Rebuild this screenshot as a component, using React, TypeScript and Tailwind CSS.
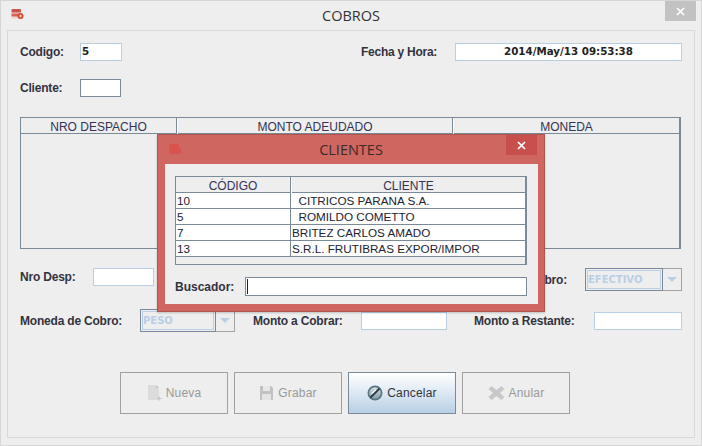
import React from "react";

const LABEL = "font-['Liberation_Sans',sans-serif] font-bold text-[12px] leading-none text-[#333340] whitespace-nowrap";

const AppIcon = ({ muted }: { muted?: boolean }) => (
  <svg width="13" height="13" viewBox="0 0 13 13">
    <rect x="0.5" y="1" width="9.5" height="10" rx="1" fill={muted ? "#d9534f" : "#f0d8d0"} />
    <rect x="0.5" y="1" width="9.5" height="3.5" rx="1" fill={muted ? "#d9534f" : "#c9524a"} />
    <rect x="0.5" y="5.5" width="9.5" height="3" fill={muted ? "#d9534f" : "#d9635a"} />
    <circle cx="9.5" cy="8" r="3" fill={muted ? "#d9534f" : "#d8443a"} />
    {!muted && <path d="M8 8h3M9.5 6.5v3" stroke="#f6d9a0" strokeWidth="1" />}
  </svg>
);

const CloseGlyph = () => (
  <svg width="9" height="9" viewBox="0 0 9 9">
    <path d="M1 1l7 7M8 1l-7 7" stroke="#ffffff" strokeWidth="1.7" />
  </svg>
);

const NewIcon = () => (
  <svg width="15" height="16" viewBox="0 0 15 16">
    <path d="M1 0h8l3 3v12H1z" fill="#dcdcdc" />
    <path d="M9 0l3 3H9z" fill="#c4c4c4" />
    <path d="M10 13.500h4.500M12.250 11.500v4" stroke="#c4c4c4" strokeWidth="1.2" />
  </svg>
);

const SaveIcon = () => (
  <svg width="15" height="16" viewBox="0 0 15 16">
    <path d="M1 1h11l2 2v12H1z" fill="#c2c2c2" />
    <rect x="4" y="1" width="7" height="5" fill="#e8e8e8" />
    <rect x="3" y="9" width="9" height="6" fill="#e4e4e4" />
  </svg>
);

const CancelIcon = () => (
  <svg width="16" height="16" viewBox="0 0 16 16">
    <defs>
      <linearGradient id="cancelFill" x1="0" y1="0" x2="0" y2="1">
        <stop offset="0" stopColor="#cfdce0" />
        <stop offset="1" stopColor="#83a0ac" />
      </linearGradient>
    </defs>
    <circle cx="8" cy="8" r="7.500" fill="#5c7480" />
    <circle cx="8" cy="8" r="5.800" fill="url(#cancelFill)" />
    <path d="M3.500 12.500l9-9" stroke="#2f3b42" strokeWidth="2" />
    <path d="M4.500 9l4.500-4.500" stroke="#eef4f5" strokeWidth="1.200" />
  </svg>
);

const DeleteIcon = () => (
  <svg width="17" height="16" viewBox="0 0 17 16">
    <path d="M3.500 1L8.500 5l5-4 3 3-4.500 4 4.500 4-3 3-5-4-5 4-3-3 4.500-4L.5 4z" fill="#c8c8c8" />
  </svg>
);

const Field = ({ className, value }: { className: string; value?: string }) => (
  <div className={`h-[18px] bg-white border border-[#b8cfe5] flex items-center font-['DejaVu_Sans',sans-serif] font-bold text-[10.3px] text-[#222] ${className}`}>
    {value}
  </div>
);

const Combo = ({ className, value }: { className: string; value: string }) => (
  <div className={`h-[23px] flex ${className}`}>
    <div className="flex-1 border border-[#7a8a99] bg-[#eeeeee] p-px">
      <div className="h-full border border-[#b8cfe5] flex items-center font-['DejaVu_Sans',sans-serif] font-bold text-[10px] text-[#b8cfe5]">
        {value}
      </div>
    </div>
    <div className="w-[19px] border border-l-0 border-[#a3a3a3] flex items-center justify-center">
      <svg width="10" height="5" viewBox="0 0 10 5">
        <path d="M0 0h10L5 5z" fill="#b8cfe5" />
      </svg>
    </div>
  </div>
);

const ActionButton = ({ label, icon, active }: { label: string; icon: React.ReactNode; active?: boolean }) => (
  <div
    className={`w-[108px] h-[42px] flex items-center justify-center gap-[4px] border font-['Liberation_Sans',sans-serif] text-[12px] tracking-[0.2px] ${
      active
        ? "border-[#7a8a99] text-[#333340] bg-gradient-to-b from-white via-[#dde8f3] to-[#b8cfe5]"
        : "border-[#a0a0a0] text-[#999999]"
    }`}
  >
    {icon}
    <span>{label}</span>
  </div>
);

const clientes = [
  ["10", "  CITRICOS PARANA S.A."],
  ["5", "  ROMILDO COMETTO"],
  ["7", "BRITEZ CARLOS AMADO"],
  ["13", "S.R.L. FRUTIBRAS EXPOR/IMPOR"],
];

const ClientesDialog = () => (
  <div className="absolute left-[156px] top-[133px] w-[388px] h-[178px] bg-[#cf6660] border border-[#b05550] flex flex-col px-[7px] shadow-[0_1px_2px_rgba(0,0,0,0.2)]">
    <div className="relative h-[29px] shrink-0 flex items-center justify-center">
      <div className="absolute left-[4px] top-[8px]">
        <AppIcon muted />
      </div>
      <span className="font-['Open_Sans',sans-serif] text-[14.5px] text-[#3a2a2a]">CLIENTES</span>
      <div className="absolute right-0 top-0 w-[31px] h-[20px] bg-[#c74f4c] flex items-center justify-center">
        <CloseGlyph />
      </div>
    </div>
    <div className="w-[373px] h-[140px] bg-[#eeeeee] pt-[12px] pl-[10px]">
      <div className="w-[352px] h-[89px] border border-[#7a8a99] border-r-2 font-['Liberation_Sans',sans-serif] text-[11.7px] text-[#222233]">
        <div className="grid grid-cols-[115px_1fr] h-[16px] border-b border-[#7a8a99] text-center text-[12px] leading-[18px] text-[#333355]">
          <div className="border-r border-[#7a8a99]">CÓDIGO</div>
          <div className="border-l border-white">CLIENTE</div>
        </div>
        {clientes.map(([codigo, nombre]) => (
          <div key={codigo} className="grid grid-cols-[115px_1fr] h-[16px] bg-white border-b border-[#7a8a99] leading-[15px]">
            <div className="border-r border-[#7a8a99] pl-[1px]">{codigo}</div>
            <div className="pl-[1px] whitespace-pre">{nombre}</div>
          </div>
        ))}
      </div>
      <div className="flex items-center mt-[12px] h-[19px]">
        <span className={`${LABEL} w-[70px]`}>Buscador:</span>
        <div className="w-[282px] h-[19px] bg-white border border-[#7a8a99] pl-[1px] flex items-center">
          <div className="w-px h-[15px] bg-[#222]" />
        </div>
      </div>
    </div>
  </div>
);

export default function App() {
  return (
    <div className="relative w-[702px] h-[446px] overflow-hidden bg-[#eeeeee] border border-[#d6d6d6] flex flex-col">
      <div className="relative h-[29px] shrink-0 flex items-center justify-center">
        <div className="absolute left-[10px] top-[7px]">
          <AppIcon />
        </div>
        <span className="font-['Open_Sans',sans-serif] text-[14.5px] text-[#333]">COBROS</span>
        <div className="absolute right-[5px] top-0 w-[31px] h-[20px] bg-[#c2c2c2] flex items-center justify-center">
          <CloseGlyph />
        </div>
      </div>

      <div className="ml-[6px] w-[688px] h-[408px] border border-[#d9d9d9] pt-[12px] pl-[12px] pr-[12px] flex flex-col">
        <div className="flex items-center h-[18px]">
          <span className={`${LABEL} w-[60px] tracking-[-0.2px]`}>Codigo:</span>
          <Field className="w-[42px] pl-[1px]" value="5" />
          <span className={`${LABEL} ml-auto w-[94px] tracking-[-0.25px]`}>Fecha y Hora:</span>
          <Field className="w-[227px] justify-center" value="2014/May/13 09:53:38" />
        </div>

        <div className="flex items-center h-[18px] mt-[18px]">
          <span className={`${LABEL} w-[60px] tracking-[-0.2px]`}>Cliente:</span>
          <div className="w-[41px] h-[18px] bg-white border border-[#7a8a99]" />
        </div>

        <div className="mt-[20px] w-[661px] h-[132px] border border-[#7a8a99] border-r-2 font-['Liberation_Sans',sans-serif] text-[12px] text-[#333355]">
          <div className="grid grid-cols-[156px_276px_1fr] h-[16px] border-b border-[#7a8a99] text-center leading-[18px]">
            <div className="border-r border-[#7a8a99]">NRO DESPACHO</div>
            <div className="border-r border-[#7a8a99] border-l border-l-white">MONTO ADEUDADO</div>
            <div className="border-l border-white">MONEDA</div>
          </div>
        </div>

        <div className="flex items-start mt-[19px] h-[23px]">
          <span className={`${LABEL} w-[73px] mt-[3px] tracking-[-0.2px]`}>Nro Desp:</span>
          <Field className="w-[61px]" />
          <span className={`${LABEL} ml-auto mr-[18px] mt-[6px] tracking-[-0.2px]`}>Forma de Cobro:</span>
          <Combo className="w-[97px]" value="EFECTIVO" />
        </div>

        <div className="flex items-center mt-[18px] h-[23px]">
          <span className={`${LABEL} w-[120px] tracking-[-0.2px]`}>Moneda de Cobro:</span>
          <Combo className="w-[95px]" value="PESO" />
          <span className={`${LABEL} ml-[18px] w-[108px] tracking-[-0.2px]`}>Monto a Cobrar:</span>
          <Field className="w-[86px]" />
          <span className={`${LABEL} ml-[27px] w-[120px] tracking-[-0.2px]`}>Monto a Restante:</span>
          <Field className="w-[88px]" />
        </div>

        <div className="flex gap-[6px] mt-[40px] ml-[100px]">
          <ActionButton label="Nueva" icon={<NewIcon />} />
          <ActionButton label="Grabar" icon={<SaveIcon />} />
          <ActionButton label="Cancelar" icon={<CancelIcon />} active />
          <ActionButton label="Anular" icon={<DeleteIcon />} />
        </div>
      </div>

      <ClientesDialog />
    </div>
  );
}
